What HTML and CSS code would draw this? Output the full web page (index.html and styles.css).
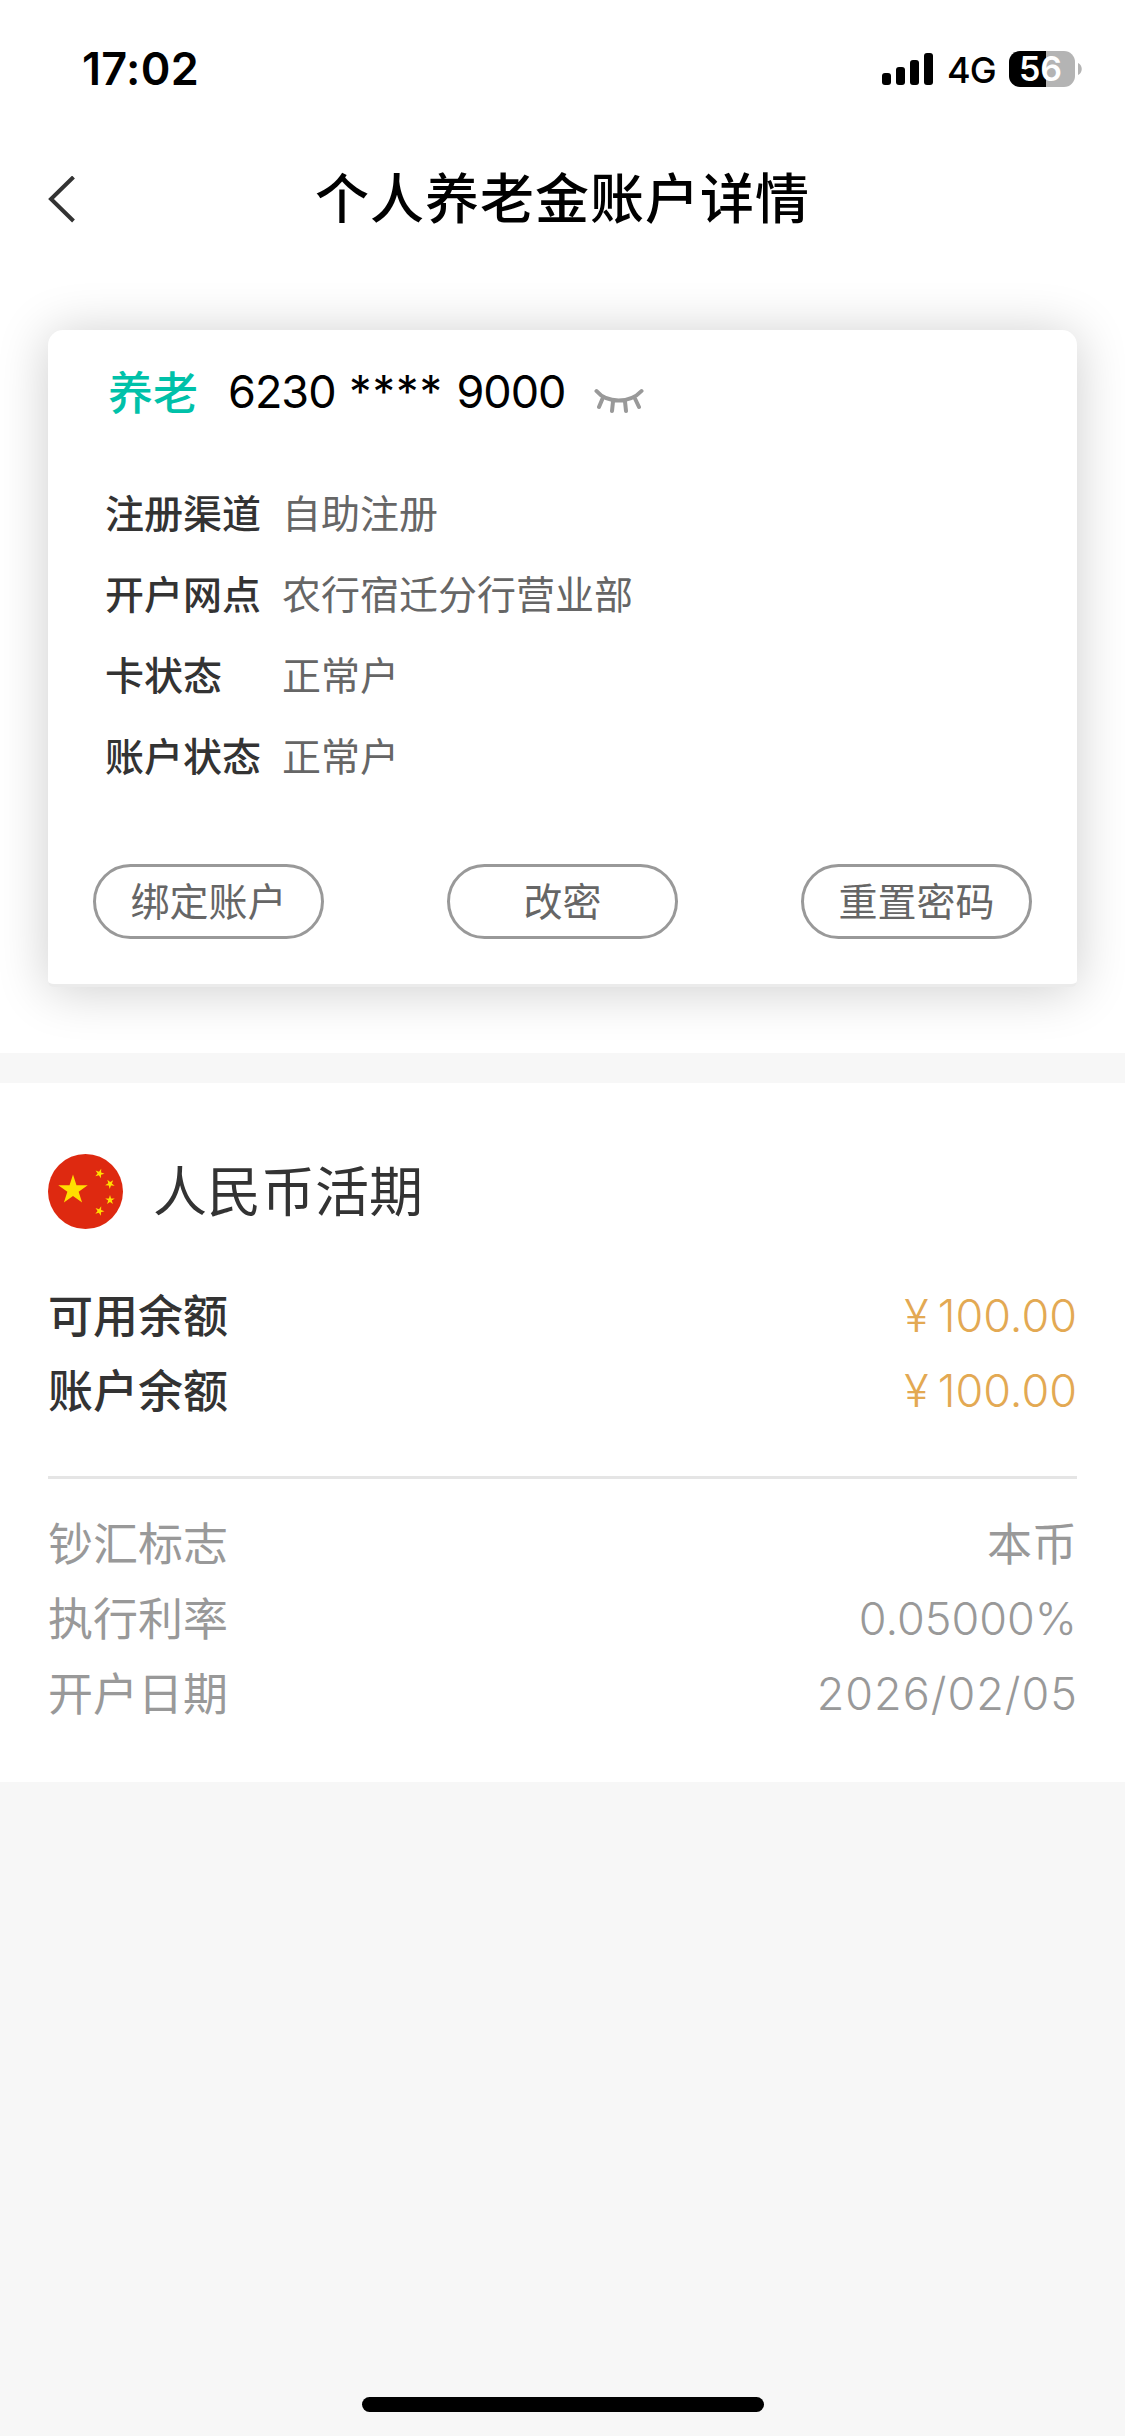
FILE: index.html
```html
<!DOCTYPE html>
<html lang="zh-CN">
<head>
<meta charset="utf-8">
<title>个人养老金账户详情</title>
<link rel="stylesheet" href="styles.css">
</head>
<body>
<div class="status">
  <span class="time">17:02</span>
  <div class="indicators">
    <svg class="signal" width="51" height="32" viewBox="0 0 51 32"><rect y="20" width="9" height="12" rx="3"/><rect x="14" y="14" width="9" height="18" rx="3"/><rect x="28" y="7" width="9" height="25" rx="3"/><rect x="42" width="9" height="32" rx="3"/></svg>
    <span class="network">4G</span>
    <div class="battery">56</div>
    <svg class="cap" width="4" height="12" viewBox="0 0 4 12"><path d="M0 0C5 2 5 10 0 12Z" fill="#b4b4b4"/></svg>
  </div>
</div>
<header class="nav">
  <svg class="back" width="28" height="48" viewBox="0 0 28 48"><path d="M25.500 1L3 23L25.500 45" fill="none" stroke="#333" stroke-width="4"/></svg>
  <h1>个人养老金账户详情</h1>
</header>
<section class="overview">
  <div class="card">
    <div class="card-head">
      <span class="tag">养老</span>
      <span class="number">6230<span class="stars"> **** </span>9000</span>
      <svg class="eye" width="50" height="26" viewBox="0 0 50 26"><g fill="none" stroke="#999" stroke-width="4" stroke-linecap="round"><path d="M2.500 3C13 15.500 36 15.500 47.500 3M9 9.500L5 19M19 13.500L18 23M31 13.500L32 23M40.500 9.500L45 19"/></g></svg>
    </div>
    <dl class="info">
      <dt>注册渠道</dt><dd>自助注册</dd>
      <dt>开户网点</dt><dd>农行宿迁分行营业部</dd>
      <dt>卡状态</dt><dd>正常户</dd>
      <dt>账户状态</dt><dd>正常户</dd>
    </dl>
    <div class="actions">
      <button>绑定账户</button>
      <button>改密</button>
      <button>重置密码</button>
    </div>
  </div>
</section>
<section class="account">
  <div class="currency">
    <svg class="flag" width="75" height="75" viewBox="0 0 75 75">
      <defs><path id="star" d="M0-1L.2245-.309L.9511-.309L.3633.118L.5878.809L0 .382L-.5878.809L-.3633.118L-.9511-.309L-.2245-.309Z"/></defs>
      <circle cx="37.500" cy="37.500" r="37.500" fill="#de2910"/>
      <g fill="#ffde00"><use href="#star" transform="translate(25 36) scale(15.500)"/><use href="#star" transform="translate(51.500 19.500) rotate(20) scale(5)"/><use href="#star" transform="translate(62 30) rotate(40) scale(5)"/><use href="#star" transform="translate(62 46) scale(5)"/><use href="#star" transform="translate(51.500 57) rotate(20) scale(5)"/></g>
    </svg>
    <h2>人民币活期</h2>
  </div>
  <div class="rows balances">
    <div class="row"><span class="label">可用余额</span><span class="amount"><i>¥</i>100.00</span></div>
    <div class="row"><span class="label">账户余额</span><span class="amount"><i>¥</i>100.00</span></div>
  </div>
  <div class="rows details">
    <div class="row"><span class="label">钞汇标志</span><span class="label">本币</span></div>
    <div class="row"><span class="label">执行利率</span><span class="rate">0.05000%</span></div>
    <div class="row"><span class="label">开户日期</span><span class="date">2026/02/05</span></div>
  </div>
</section>
<footer class="home"><div class="bar"></div></footer>
</body>
</html>
```
FILE: styles.css
```css
* { box-sizing: border-box; margin: 0; padding: 0; }
body {
  width: 1125px;
  height: 2436px;
  display: flex;
  flex-direction: column;
  background: #f7f7f7;
  font-family: Inter, "Noto Sans CJK SC", sans-serif;
  overflow: hidden;
}
.status {
  height: 132px;
  padding: 6px 43px 0 82px;
  display: flex;
  align-items: center;
  justify-content: space-between;
  background: #fff;
}
.time { font-size: 45px; font-weight: 600; line-height: 54px; letter-spacing: .3px; }
.indicators { display: flex; align-items: center; }
.signal { margin-right: 14px; }
.network { width: 62px; padding-top: 2px; font-size: 36px; font-weight: 500; line-height: 44px; letter-spacing: -1px; }
.battery {
  width: 66px;
  height: 36px;
  padding-right: 3px;
  border-radius: 11px;
  background: linear-gradient(90deg, #000 37px, #b4b4b4 37px);
  color: #fff;
  font-size: 34px;
  font-weight: 600;
  line-height: 36px;
  text-align: center;
}
.cap { margin-left: 3px; }
.nav {
  height: 135px;
  padding: 0 48px;
  display: grid;
  grid-template-columns: 28px 1fr 28px;
  align-items: center;
  background: #fff;
}
h1 { padding-top: 1px; font-size: 54px; font-weight: 500; line-height: 80px; letter-spacing: 1px; text-align: center; }
.overview { height: 786px; padding: 63px 48px 66px; background: #fff; }
.card {
  height: 657px;
  padding: 27px 45px 45px;
  border-bottom: 3px solid #ebebeb;
  border-radius: 15px 15px 6px 6px;
  background: #fff;
  box-shadow: 0 3px 52px rgba(0, 0, 0, .2);
}
.card-head { height: 72px; padding-left: 15px; display: flex; align-items: center; }
.tag { width: 120px; padding-bottom: 6px; color: #00c1a9; font-size: 45px; font-weight: 500; }
.number { width: 366px; padding-bottom: 3px; font-size: 45px; white-space: pre; letter-spacing: -1px; }
.stars { letter-spacing: .9px; }
.eye { margin-top: 16px; }
.info {
  padding: 41px 0 0 12px;
  display: grid;
  grid-template-columns: 177px 1fr;
  grid-auto-rows: 81px;
  align-items: center;
  font-size: 39px;
}
dt { color: #333; font-weight: 500; }
dd { color: #666; font-weight: 400; }
.actions { margin-top: 70px; display: flex; justify-content: space-between; }
button {
  width: 231px;
  height: 75px;
  border: 3px solid #999;
  border-radius: 38px;
  background: #fff;
  color: #666;
  font: 400 39px/66px Inter, "Noto Sans CJK SC", sans-serif;
}
.account { height: 699px; margin-top: 30px; padding: 71px 48px 0; background: #fff; }
.currency { display: flex; align-items: center; height: 75px; }
h2 { margin-left: 30px; padding-bottom: 7px; color: #333; font-size: 54px; font-weight: 400; }
.row { height: 75px; display: flex; align-items: center; justify-content: space-between; }
.rows { font-size: 45px; font-weight: 350; }
.balances { height: 250px; padding-top: 49px; border-bottom: 3px solid #e5e5e5; color: #333; font-weight: 500; }
.details { padding-top: 27px; color: #999; }
.label { padding-bottom: 4px; }
.details .label { padding-bottom: 4px; font-weight: 400; }
.amount { color: #e3a953; font-weight: 350; }
.amount i { margin-right: 9px; font-style: normal; }
.date { letter-spacing: 1px; margin-right: -1px; }
.home { margin-top: auto; height: 39px; display: flex; justify-content: center; }
.bar { width: 402px; height: 15px; border-radius: 8px; background: #000; }
```
